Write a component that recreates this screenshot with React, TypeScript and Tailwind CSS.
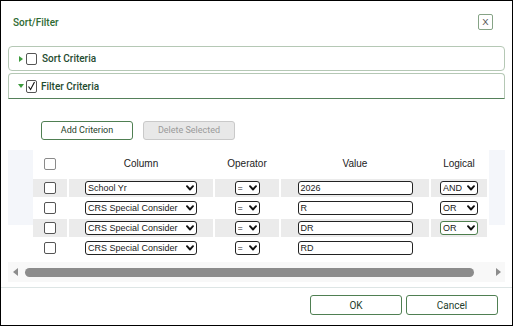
import React from "react";

const Chevron = ({ className = "" }: { className?: string }) => (
  <svg viewBox="0 0 8 6" className={className} width="8" height="6">
    <polyline points="1,1.2 4,4.5 7,1.2" fill="none" stroke="#111" strokeWidth="1.9" strokeLinecap="round" strokeLinejoin="round" />
  </svg>
);

const Box = ({ light = false }: { light?: boolean }) => (
  <div className={`w-[12px] h-[12px] rounded-[2px] bg-white border ${light ? "border-[#8a8a8a]" : "border-[#555]"}`} />
);

const Select = ({ text, w, green = false }: { text: string; w: string; green?: boolean }) => (
  <div className={`${w} h-[14px] flex items-center justify-between rounded-[3px] border bg-white pl-[2px] pr-[2px] ${green ? "border-[#4c7d4c]" : "border-[#222]"}`}>
    <span className="text-[9px] leading-none text-[#1a1a1a] whitespace-nowrap overflow-hidden">{text}</span>
    <Chevron className="shrink-0" />
  </div>
);

const Input = ({ text }: { text: string }) => (
  <div className="w-[115px] h-[14px] flex items-center rounded-[3px] border border-[#222] bg-white pl-[2px]">
    <span className="text-[9px] leading-none text-[#1a1a1a]">{text}</span>
  </div>
);

type Row = { col: string; val: string; logical?: string; green?: boolean };
const rows: Row[] = [
  { col: "School Yr", val: "2026", logical: "AND" },
  { col: "CRS Special Consider", val: "R", logical: "OR" },
  { col: "CRS Special Consider", val: "DR", logical: "OR", green: true },
  { col: "CRS Special Consider", val: "RD" },
];

const gridCols = "grid grid-cols-[34px_144px_64px_148px_56px] gap-x-[2px]";

export default function App() {
  return (
    <div className="w-[513px] h-[326px] border border-black bg-white flex flex-col overflow-hidden" style={{ fontFamily: "'Liberation Sans', Arial, sans-serif" }}>
      {/* Title bar */}
      <div className="h-[42px] shrink-0 flex items-center justify-between pl-[12px] pr-[19px]">
        <span className="text-[10px] font-medium text-[#2f6a33]" style={{ fontFamily: "Roboto, 'Liberation Sans', sans-serif" }}>Sort/Filter</span>
        <div className="w-[15px] h-[16px] rounded-[2px] border border-[#86a386] flex items-center justify-center text-[9.5px] text-[#555] leading-none">X</div>
      </div>

      {/* Panels */}
      <div className="mx-[7px] mt-[3px] flex flex-col gap-[2px]" style={{ fontFamily: "Roboto, 'Liberation Sans', sans-serif" }}>
        <div className="h-[25px] rounded-[4px] border border-[#b5c8b5] flex items-center pl-[10px]">
          <svg width="4" height="6" viewBox="0 0 4 6"><polygon points="0,0 4,3 0,6" fill="#3c9a3c" /></svg>
          <div className="ml-[3px] w-[11px] h-[12px] rounded-[2px] border border-[#555] bg-white" />
          <span className="ml-[5px] text-[10px] font-medium text-[#1f4b30]">Sort Criteria</span>
        </div>
        <div className="h-[26px] rounded-t-[4px] border border-[#b5c8b5] border-b-[#55805a] flex items-center pl-[9px]">
          <svg width="6" height="4" viewBox="0 0 6 4"><polygon points="0,0 6,0 3,4" fill="#3c9a3c" /></svg>
          <div className="ml-[2px] w-[11px] h-[13px] rounded-[2px] border border-[#555] bg-white flex items-center justify-center">
            <svg width="9" height="10" viewBox="0 0 9 10"><polyline points="1.5,5.5 3.6,8.5 7.5,1" fill="none" stroke="#111" strokeWidth="1.1" /></svg>
          </div>
          <span className="ml-[4px] text-[10px] font-medium text-[#1f4b30]">Filter Criteria</span>
        </div>
      </div>

      {/* Buttons */}
      <div className="mt-[22px] pl-[40px] flex gap-[10px]" style={{ fontFamily: "Roboto, 'Liberation Sans', sans-serif" }}>
        <div className="w-[92px] h-[19px] rounded-[3px] border border-[#4f7f52] flex items-center justify-center text-[9px] text-[#1f3f2a]">Add Criterion</div>
        <div className="w-[92px] h-[19px] rounded-[3px] border border-[#c9c9c9] bg-[#e8e8e8] flex items-center justify-center text-[9px] text-[#9a9a9a]">Delete Selected</div>
      </div>

      {/* Table */}
      <div className="mx-[7px] mt-[10px] relative">
        <div className="absolute left-0 top-0 w-full h-[75px] bg-[#f4f6fa]" />
        <div className="relative ml-[25px] w-[456px] bg-white flex flex-col gap-y-[2px]">
          <div className={`${gridCols} h-[27px] items-center text-[10px] text-[#222]`}>
            <div className="flex justify-center"><Box light /></div>
            <div className="text-center">Column</div>
            <div className="text-center">Operator</div>
            <div className="text-center">Value</div>
            <div className="text-center">Logical</div>
          </div>
          {rows.map((r, i) => {
            const bg = i % 2 === 0 ? "bg-[#ebebeb]" : "bg-white";
            return (
              <div key={i} className={`${gridCols} h-[18px]`}>
                <div className={`${bg} flex items-center justify-center`}><Box /></div>
                <div className={`${bg} flex items-center justify-center`}><Select text={r.col} w="w-[112px]" /></div>
                <div className={`${bg} flex items-center justify-center`}><Select text="=" w="w-[25px]" /></div>
                <div className={`${bg} flex items-center justify-center`}><Input text={r.val} /></div>
                <div className={`${bg} flex items-center justify-center`}>
                  {r.logical ? <Select text={r.logical} w="w-[38px]" green={r.green} /> : null}
                </div>
              </div>
            );
          })}
        </div>
      </div>

      {/* Scrollbar */}
      <div className="mx-[7px] mt-[5px] h-[20px] bg-[#f8f8f8] flex items-center pl-[5px] pr-[4px]">
        <svg width="5" height="8" viewBox="0 0 5 8"><polygon points="5,0 0,4 5,8" fill="#8c8c8c" /></svg>
        <div className="ml-[7px] w-[449px] h-[9px] rounded-full bg-[#8c8c8c]" />
        <div className="flex-1" />
        <svg width="5" height="8" viewBox="0 0 5 8"><polygon points="0,0 5,4 0,8" fill="#8c8c8c" /></svg>
      </div>

      {/* Separator */}
      <div className="mt-[5px] h-px bg-[#dde5e5]" />

      {/* Footer */}
      <div className="mt-[7px] pr-[14px] flex justify-end gap-[4px]" style={{ fontFamily: "Roboto, 'Liberation Sans', sans-serif" }}>
        <div className="w-[92px] h-[20px] rounded-[3px] border border-[#4f7f52] flex items-center justify-center text-[10px] text-[#24402c]">OK</div>
        <div className="w-[92px] h-[20px] rounded-[3px] border border-[#4f7f52] flex items-center justify-center text-[10px] text-[#24402c]">Cancel</div>
      </div>
    </div>
  );
}
